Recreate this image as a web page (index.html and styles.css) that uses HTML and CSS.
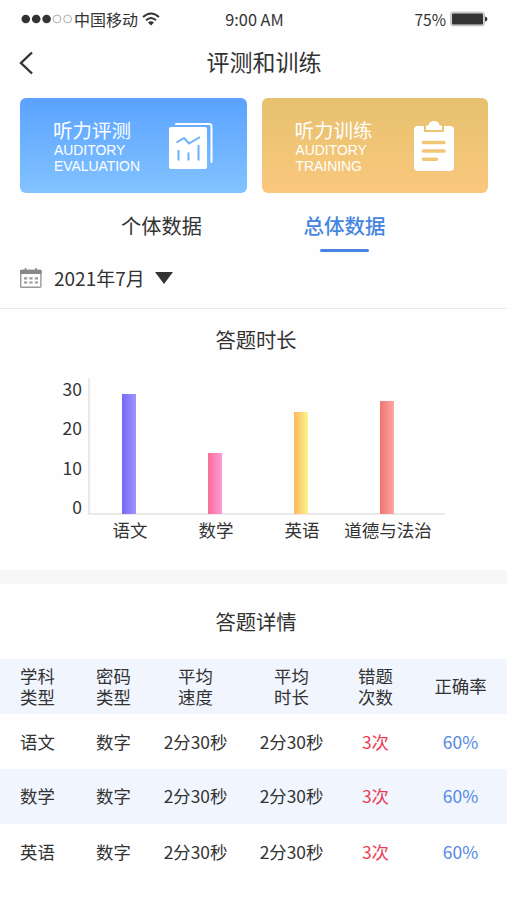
FILE: index.html
```html
<!DOCTYPE html>
<html lang="zh-CN">
<head>
  <meta charset="UTF-8" />
  <meta name="viewport" content="width=device-width, initial-scale=1" />
  <title>评测和训练</title>
  <link rel="stylesheet" href="styles.css">
</head>
<body>
  <div class="status-bar">
    <div class="status-left">
      <svg class="signal" width="52" height="10" viewBox="0 0 52 10">
        <circle cx="4.8" cy="5" r="4.3" fill="#333" />
        <circle cx="15.2" cy="5" r="4.3" fill="#333" />
        <circle cx="25.6" cy="5" r="4.3" fill="#333" />
        <circle cx="36" cy="5" r="3.9" fill="none" stroke="#999" stroke-width=".8" />
        <circle cx="46.6" cy="5" r="3.9" fill="none" stroke="#999" stroke-width=".8" />
      </svg>
      <span class="carrier">中国移动</span>
      <svg class="wifi" width="18" height="14" viewBox="0 0 18 14">
        <path d="M1 5Q9 -2 17 5M4 8.3Q9 3.8 14 8.3" fill="none" stroke="#333" stroke-width="2" />
        <path d="M6 10.6Q9 8 12 10.6L9 13.6Z" fill="#333" />
      </svg>
    </div>
    <span class="status-time">9:00 AM</span>
    <div class="status-right">
      <span>75%</span>
      <svg width="38" height="16" viewBox="0 0 38 16">
        <rect x=".7" y="1.2" width="33.6" height="13.6" rx="2" fill="#ddd" stroke="#bbb" />
        <rect x="2" y="2.5" width="31" height="11" rx="1" fill="#333" />
        <path d="M35 5.5Q37.5 6 37.5 8T35 10.5Z" fill="#333" />
      </svg>
    </div>
  </div>

  <header class="nav">
    <svg class="back" width="16" height="24" viewBox="0 0 16 24">
      <path d="M13 1.5L2 12L13 22.5" fill="none" stroke="#333" stroke-width="2.4" />
    </svg>
    <h1>评测和训练</h1>
  </header>

  <div class="cards">
    <div class="card card-blue">
      <div class="card-text">
        <h2>听力评测</h2>
        <p>AUDITORY<br>EVALUATION</p>
      </div>
      <svg class="card-icon" width="44" height="50" viewBox="0 0 44 50">
        <path d="M7 3H40Q42.500 3 42.500 5.500V41" fill="none" stroke="#fff" stroke-width="2" stroke-linecap="round" />
        <rect x="0" y="6" width="38" height="42" rx="2" fill="#fff" />
        <path d="M7.500 21.500L15 17L20 22.500L31 16" fill="none" stroke="#6bb1f8" stroke-width="2" />
        <path d="M9.500 29V39.500M19.500 31.500V39.500M29.500 24V39.500" fill="none" stroke="#6bb1f8" stroke-width="2" />
      </svg>
    </div>
    <div class="card card-gold">
      <div class="card-text">
        <h2>听力训练</h2>
        <p>AUDITORY<br>TRAINING</p>
      </div>
      <svg class="card-icon" width="40" height="52" viewBox="0 0 40 52">
        <path d="M4 6H10V12H30V6H36Q40 6 40 10V47Q40 51 36 51H4Q0 51 0 47V10Q0 6 4 6Z" fill="#fff" />
        <path d="M12 10V5.500H14.500C15 -.5 25 -.5 25.500 5.500H28V10Z" fill="#fff" />
        <path d="M9.500 22.500H30M9.500 31H30M9.500 39.300H22.500" stroke="#f1c676" stroke-width="3.600" stroke-linecap="round" />
      </svg>
    </div>
  </div>

  <div class="tabs">
    <div class="tab">个体数据</div>
    <div class="tab active">总体数据</div>
  </div>

  <div class="filter">
    <svg width="22" height="20" viewBox="0 0 22 20">
      <rect x=".7" y="2.200" width="20.200" height="17" rx="1" fill="#fff" stroke="#999" stroke-width="1.400" />
      <path d="M0 2H21.600V6H0Z" fill="#888" />
      <path d="M5.500 0V3.500M16 0V3.500" stroke="#888" stroke-width="1.600" />
      <path d="M4 10.300H18M4 14.500H18" stroke="#999" stroke-width="2.200" stroke-dasharray="3.200 2.200" />
    </svg>
    <span class="month">2021年7月</span>
    <span class="arrow"></span>
  </div>

  <section class="duration">
    <h3>答题时长</h3>
    <div class="chart">
      <div class="y-axis">
        <span>30</span>
        <span>20</span>
        <span>10</span>
        <span>0</span>
      </div>
      <div class="plot">
        <div class="bars">
          <div class="col"><div class="bar purple" style="height: 120px"></div></div>
          <div class="col"><div class="bar pink" style="height: 61px"></div></div>
          <div class="col"><div class="bar yellow" style="height: 102px"></div></div>
          <div class="col"><div class="bar red" style="height: 113px"></div></div>
        </div>
        <div class="x-axis">
          <span>语文</span>
          <span>数学</span>
          <span>英语</span>
          <span>道德与法治</span>
        </div>
      </div>
    </div>
  </section>

  <section class="detail">
    <h3>答题详情</h3>
    <table>
      <colgroup>
        <col class="c1"><col class="c2"><col class="c3"><col class="c4"><col class="c5"><col class="c6">
      </colgroup>
      <thead>
        <tr>
          <th>学科<br>类型</th>
          <th>密码<br>类型</th>
          <th>平均<br>速度</th>
          <th>平均<br>时长</th>
          <th>错题<br>次数</th>
          <th>正确率</th>
        </tr>
      </thead>
      <tbody>
        <tr>
          <td>语文</td>
          <td>数字</td>
          <td>2分30秒</td>
          <td>2分30秒</td>
          <td class="wrong">3次</td>
          <td class="rate">60%</td>
        </tr>
        <tr>
          <td>数学</td>
          <td>数字</td>
          <td>2分30秒</td>
          <td>2分30秒</td>
          <td class="wrong">3次</td>
          <td class="rate">60%</td>
        </tr>
        <tr>
          <td>英语</td>
          <td>数字</td>
          <td>2分30秒</td>
          <td>2分30秒</td>
          <td class="wrong">3次</td>
          <td class="rate">60%</td>
        </tr>
      </tbody>
    </table>
  </section>
</body>
</html>
```
FILE: styles.css
```css
* {
  box-sizing: border-box;
}
body {
  margin: 0;
  height: 900px;
  background: #fefefe;
  color: #333;
  font-family: "Noto Sans CJK SC", sans-serif;
  overflow: hidden;
}
h1, h2, h3, p {
  margin: 0;
  font-weight: normal;
}
svg {
  display: block;
  flex: none;
}

/* status bar */
.status-bar {
  display: grid;
  grid-template-columns: 1fr auto 1fr;
  align-items: center;
  height: 38px;
  padding: 0 19px 0 21px;
  font-size: 16px;
  line-height: 36px;
}
.status-left, .status-right {
  display: flex;
  align-items: center;
}
.carrier {
  margin-left: 1px;
}
.wifi {
  margin-left: 4px;
}
.status-right {
  justify-content: flex-end;
  gap: 4px;
  font-size: 15.5px;
}
.status-time {
  font-size: 16.3px;
}

.nav {
  display: grid;
  grid-template-columns: 30px 1fr;
  align-items: center;
  height: 49px;
  padding: 0 28px 0 19px;
}
.nav h1 {
  font-size: 23px;
  line-height: 47px;
  height: 49px;
  text-align: center;
}

/* cards */
.cards {
  display: flex;
  gap: 15px;
  margin-top: 11px;
  padding: 0 19px 0 20px;
}
.card {
  flex: 1;
  display: flex;
  justify-content: space-between;
  align-items: center;
  height: 95px;
  padding: 0 34px 0 33px;
  border-radius: 6px;
  color: #fff;
}
.card-blue {
  background: linear-gradient(#5aa2ff, #82c3ff);
}
.card-gold {
  background: linear-gradient(#e6c16e, #fac87d);
}
.card h2 {
  font-size: 19.5px;
  line-height: 25px;
}
.card p {
  margin-left: 1px;
  padding-top: 1px;
  font-family: "Liberation Sans", sans-serif;
  font-size: 13.9px;
  line-height: 15.5px;
}

/* tabs */
.tabs {
  display: flex;
  justify-content: center;
  gap: 87px;
  height: 59px;
  padding-right: 1px;
}
.tab {
  width: 96px;
  padding-top: 18px;
  font-size: 20.2px;
  line-height: 30px;
  text-align: center;
}
.tab.active {
  padding-top: 17px;
  color: #4585e0;
  font-size: 20.5px;
  font-weight: 500;
}
.tab.active::after {
  content: "";
  display: block;
  width: 49px;
  height: 3px;
  margin: 9px auto 0;
  border-radius: 2px;
  background: #4585e0;
}

.filter {
  display: flex;
  align-items: center;
  height: 57px;
  padding-left: 20px;
  padding-bottom: 4px;
  border-bottom: 1px solid #e9e9e9;
}
.month {
  margin-left: 12px;
  font-size: 19px;
  line-height: 30px;
}
.arrow {
  margin-left: 10px;
  border-top: 12px solid #333;
  border-left: 9px solid transparent;
  border-right: 9px solid transparent;
}

/* chart */
h3 {
  padding-left: 5px;
  font-size: 20.3px;
  line-height: 30px;
  text-align: center;
}
.duration {
  height: 275px;
  padding-top: 15px;
  border-bottom: 14px solid #f7f7f7;
}
.chart {
  display: flex;
  margin-top: 24px;
}
.y-axis {
  display: flex;
  flex-direction: column;
  justify-content: space-between;
  width: 82px;
  height: 139px;
  padding-top: 1px;
  font-size: 17.5px;
  line-height: 20px;
  text-align: right;
}
.plot {
  width: 357px;
  margin-left: 6px;
}
.bars, .x-axis {
  display: grid;
  grid-template-columns: repeat(4, 86px);
}
.bars {
  height: 137px;
  border-left: 2px solid #eaeaea;
  border-bottom: 2px solid #eaeaea;
}
.col {
  display: flex;
  align-items: flex-end;
  justify-content: center;
  height: 136px;
  padding-right: 9px;
}
.bar {
  width: 14px;
}
.purple {
  background: linear-gradient(90deg, #7468f5, #a096ff);
}
.pink {
  background: linear-gradient(90deg, #fb6d95, #fd9bdc);
}
.yellow {
  background: linear-gradient(90deg, #ffb660, #faf68d);
}
.red {
  background: linear-gradient(90deg, #ef7474, #ffa8a0);
}
.x-axis {
  margin-left: -1px;
  font-size: 17.5px;
  line-height: 30px;
  text-align: center;
  white-space: nowrap;
}
.x-axis span {
  justify-self: center;
}

/* table */
.detail h3 {
  padding-top: 22px;
  height: 75px;
}
table {
  width: 507px;
  table-layout: fixed;
  border-collapse: collapse;
  font-size: 17.4px;
}
.c1 { width: 82px; }
.c2 { width: 63px; }
.c3 { width: 101px; }
.c4 { width: 91px; }
.c5 { width: 77px; }
.c6 { width: 93px; }
th, td {
  height: 55px;
  padding: 0;
  font-weight: normal;
  line-height: 20.5px;
  text-align: center;
}
tbody tr:nth-child(odd) td {
  padding-top: 2px;
}
th:first-child, td:first-child {
  padding-left: 20px;
  text-align: left;
}
thead tr, tbody tr:nth-child(even) {
  background: #f1f5fe;
}
.wrong {
  color: #e83e57;
}
.rate {
  color: #5488e2;
}
```
